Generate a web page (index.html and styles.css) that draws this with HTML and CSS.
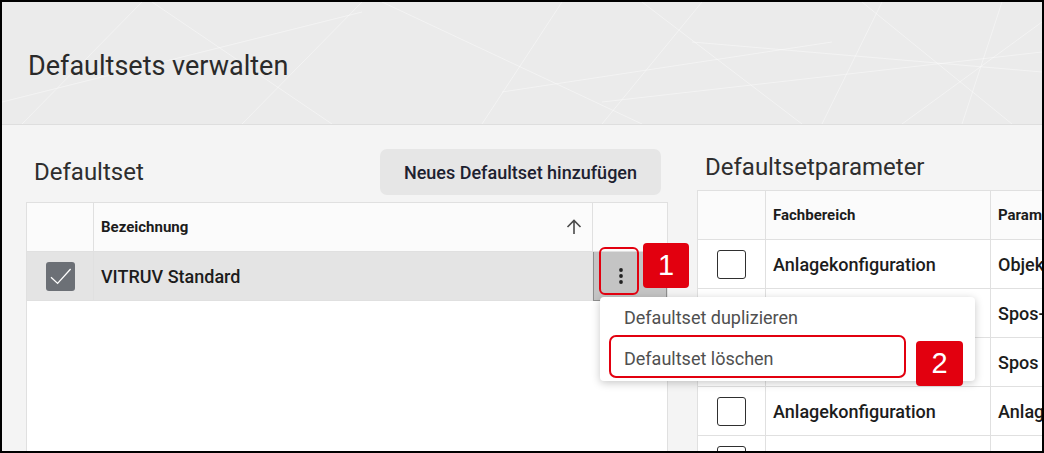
FILE: index.html
```html
<!DOCTYPE html>
<html lang="de">
<head>
<meta charset="UTF-8" />
<title>Defaultsets verwalten</title>
<link rel="stylesheet" href="styles.css">
</head>
<body>
  <div class="screen">

    <!-- Page header -->
    <header class="page-head">
      <svg class="head-lines" width="1040" height="122" viewBox="0 0 1040 122">
        <g stroke="#ffffff" stroke-opacity="0.4" stroke-width="1" fill="none">
          <line x1="20" y1="122" x2="140" y2="0" />
          <line x1="0" y1="100" x2="360" y2="10" />
          <line x1="360" y1="0" x2="240" y2="122" />
          <line x1="380" y1="0" x2="640" y2="122" />
          <line x1="560" y1="0" x2="480" y2="122" />
          <line x1="500" y1="90" x2="830" y2="40" />
          <line x1="640" y1="0" x2="800" y2="122" />
          <line x1="700" y1="0" x2="600" y2="122" />
          <line x1="600" y1="100" x2="1040" y2="50" />
          <line x1="820" y1="122" x2="880" y2="0" />
          <line x1="860" y1="0" x2="1010" y2="122" />
          <line x1="900" y1="122" x2="1040" y2="20" />
          <line x1="690" y1="40" x2="1040" y2="70" />
          <line x1="1000" y1="0" x2="960" y2="122" />
          <line x1="150" y1="0" x2="330" y2="122" />
        </g>
      </svg>
      <h1>Defaultsets verwalten</h1>
    </header>

    <main class="content">

      <!-- Defaultset list -->
      <section class="panel panel-sets">
        <div class="panel-head">
          <h2>Defaultset</h2>
          <button class="btn-add">Neues Defaultset hinzufügen</button>
        </div>

        <div class="sets-table">
          <div class="sets-row sets-head">
            <div class="cell cell-sel"></div>
            <div class="cell cell-name">
              <span>Bezeichnung</span>
              <svg class="sort-icon" width="16" height="16" viewBox="0 0 16 16">
                <path d="M8 15V1.5M1.5 8L8 1.5L14.5 8" fill="none" stroke="#4a4a4a" stroke-width="1.6" />
              </svg>
            </div>
            <div class="cell cell-act"></div>
          </div>

          <div class="sets-row is-selected">
            <div class="cell cell-sel">
              <span class="check check-on">
                <svg width="29" height="29" viewBox="0 0 29 29">
                  <path d="M5 15.2L11.6 21.4L24.6 7" fill="none" stroke="#ffffff" stroke-width="1.3" />
                </svg>
              </span>
            </div>
            <div class="cell cell-name">VITRUV Standard</div>
            <div class="cell cell-act is-open">
              <svg class="kebab" width="4" height="16" viewBox="0 0 4 16">
                <circle cx="2" cy="2" r="1.9" fill="#222" />
                <circle cx="2" cy="8" r="1.9" fill="#222" />
                <circle cx="2" cy="14" r="1.9" fill="#222" />
              </svg>
            </div>
          </div>

          <div class="sets-fill"></div>
        </div>
      </section>

      <!-- Parameter table -->
      <section class="panel panel-params">
        <h2>Defaultsetparameter</h2>
        <table class="params-table">
          <thead>
            <tr>
              <th class="col-sel"></th>
              <th class="col-area">Fachbereich</th>
              <th>Parameter</th>
            </tr>
          </thead>
          <tbody>
            <tr>
              <td class="col-sel"><span class="check"></span></td>
              <td class="col-area">Anlagekonfiguration</td>
              <td>Objektklasse</td>
            </tr>
            <tr>
              <td class="col-sel"><span class="check"></span></td>
              <td class="col-area">Anlagekonfiguration</td>
              <td>Spos-Nummer</td>
            </tr>
            <tr>
              <td class="col-sel"><span class="check"></span></td>
              <td class="col-area">Anlagekonfiguration</td>
              <td>Spos Bezeichnung</td>
            </tr>
            <tr>
              <td class="col-sel"><span class="check"></span></td>
              <td class="col-area">Anlagekonfiguration</td>
              <td>Anlagentyp</td>
            </tr>
            <tr>
              <td class="col-sel"><span class="check"></span></td>
              <td class="col-area">Anlagekonfiguration</td>
              <td>Hersteller</td>
            </tr>
          </tbody>
        </table>
      </section>
    </main>

    <!-- Context menu of the selected row -->
    <div class="menu">
      <div class="menu-item">Defaultset duplizieren</div>
      <div class="menu-item">Defaultset löschen</div>
    </div>

    <!-- Annotation marks -->
    <div class="mark mark-1"></div>
    <div class="badge badge-1">1</div>
    <div class="mark mark-2"></div>
    <div class="badge badge-2">2</div>

  </div>
</body>
</html>
```

FILE: styles.css
```css
:root {
  --line: #e0e0e0;
  --red: #e2000f;
  --text: #1c1c1c;
}

* {
  box-sizing: border-box;
}

body {
  margin: 0;
  font-family: Roboto, 'Liberation Sans', sans-serif;
  color: var(--text);
  background: #ffffff;
}

.screen {
  position: relative;
  width: 1044px;
  height: 453px;
  border: 2px solid #000;
  display: flex;
  flex-direction: column;
  overflow: hidden;
  background: #f4f4f4;
}

/* header */

.page-head {
  position: relative;
  flex: none;
  height: 123px;
  background: #ebebeb;
  border-bottom: 1px solid #dedede;
  display: flex;
  align-items: center;
  padding: 6px 0 0 26px;
  overflow: hidden;
}

.head-lines {
  position: absolute;
  left: 0;
  top: 0;
}

.page-head h1 {
  position: relative;
  margin: 0;
  font-size: 27px;
  font-weight: 400;
  color: #2a2a2a;
}

/* content */

.content {
  flex: 1;
  display: flex;
  gap: 29px;
  padding-left: 24px;
  min-height: 0;
}

.panel h2 {
  margin: 0;
  font-size: 24px;
  font-weight: 400;
  color: #2e2e2e;
}

.panel-sets {
  flex: none;
  width: 642px;
  display: flex;
  flex-direction: column;
}

.panel-head {
  display: flex;
  justify-content: space-between;
  align-items: center;
  padding: 24px 7px 0 8px;
}

.btn-add {
  height: 46px;
  padding: 0 24px;
  border: none;
  border-radius: 7px;
  background: #e6e6e6;
  font-family: Roboto, sans-serif;
  font-size: 18px;
  font-weight: 500;
  color: #1d2130;
}

.sets-table {
  flex: 1;
  margin-top: 7px;
  display: flex;
  flex-direction: column;
  border: 1px solid var(--line);
  border-bottom: none;
  background: #ffffff;
}

.sets-row {
  display: grid;
  grid-template-columns: 67px 499px 1fr;
  height: 49px;
  border-bottom: 1px solid var(--line);
}

.sets-head {
  background: #fbfbfb;
}

.sets-row.is-selected {
  background: #e4e4e4;
}

.cell {
  display: flex;
  align-items: center;
  border-right: 1px solid var(--line);
}

.cell:last-child {
  border-right: none;
}

.cell-sel {
  justify-content: center;
}

.cell-name {
  padding-left: 7px;
  font-size: 18px;
  font-weight: 500;
}

.sets-head .cell-name {
  justify-content: space-between;
  padding-right: 10px;
  font-size: 15px;
  font-weight: 700;
}

.cell-act.is-open {
  background: #c4c4c4;
  border: 1px solid #8e8e8e;
  border-top: none;
  padding-left: 25px;
  margin-bottom: -1px;
}

.sets-fill {
  flex: 1;
}

.check {
  display: block;
  width: 29px;
  height: 29px;
  border: 1px solid #2f2f2f;
  border-radius: 3px;
  background: #ffffff;
}

.check-on {
  border: none;
  background: #6c7076;
}

.check svg {
  display: block;
}

/* parameter table */

.panel-params {
  flex: none;
  width: 520px;
  padding-top: 27px;
}

.panel-params h2 {
  line-height: 30px;
  margin-bottom: 8px;
  padding-left: 8px;
}

.params-table {
  border-collapse: collapse;
  background: #ffffff;
  table-layout: fixed;
  width: 520px;
}

.params-table th,
.params-table td {
  height: 49px;
  padding: 0 0 0 7px;
  border: 1px solid var(--line);
  text-align: left;
  white-space: nowrap;
  overflow: hidden;
}

.params-table th {
  background: #fbfbfb;
  font-size: 15px;
  font-weight: 700;
}

.params-table td {
  font-size: 18px;
  font-weight: 500;
}

.params-table .col-sel {
  width: 68px;
  padding: 0 0 0 19px;
}

.params-table .col-area {
  width: 225px;
}

/* context menu */

.menu {
  position: absolute;
  left: 598px;
  top: 295px;
  width: 375px;
  height: 84px;
  background: #ffffff;
  border-radius: 4px;
  box-shadow: 0 2px 8px rgba(0, 0, 0, 0.22);
}

.menu-item {
  height: 41px;
  line-height: 41px;
  padding-left: 24px;
  font-size: 18px;
  color: #505050;
}

/* annotations */

.mark {
  position: absolute;
  border: 2.5px solid var(--red);
  border-radius: 6px;
}

.mark-1 {
  left: 597px;
  top: 245px;
  width: 40px;
  height: 48px;
}

.mark-2 {
  left: 607px;
  top: 333px;
  width: 297px;
  height: 43px;
  border-radius: 7px;
}

.badge {
  position: absolute;
  width: 46px;
  height: 45px;
  border-radius: 4px;
  background: var(--red);
  color: #ffffff;
  font-family: 'Liberation Sans', Arial, sans-serif;
  font-size: 29px;
  line-height: 45px;
  text-align: center;
}

.badge-1 {
  left: 641px;
  top: 241px;
}

.badge-2 {
  left: 914px;
  top: 339px;
  width: 47px;
}
```
